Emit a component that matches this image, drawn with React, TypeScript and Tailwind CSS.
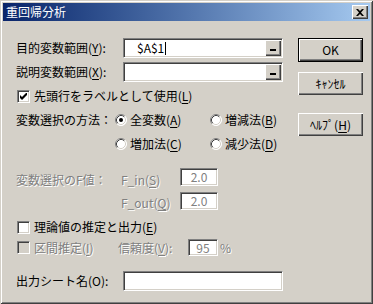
import clsx from 'clsx';
import type { ReactNode } from 'react';

const sunken =
  'border border-t-[#808080] border-l-[#808080] border-b-white border-r-white shadow-[inset_1px_1px_0_#404040,inset_-1px_-1px_0_#d4d0c8]';
const raised =
  'shadow-[inset_1px_1px_0_#fff,inset_-1px_-1px_0_#404040,inset_-2px_-2px_0_#808080]';
const grayText = 'text-[#808080] [text-shadow:1px_1px_0_#fff]';

const U = ({ children }: { children: ReactNode }) => <span className="underline underline-offset-2">{children}</span>;

const Edit = ({
  className,
  value,
  disabled,
  refBtn,
  caret,
}: {
  className?: string;
  value?: string;
  disabled?: boolean;
  refBtn?: boolean;
  caret?: boolean;
}) => (
  <div className={clsx('relative flex items-center bg-white', sunken, className)}>
    {value && (
      <span className={clsx('flex items-center', disabled ? 'w-full justify-center text-[#808080]' : 'pl-[13px] text-black')}>
        {value}
        {caret && <span className="ml-[1px] inline-block w-[1px] h-[13px] bg-black" />}
      </span>
    )}
    {refBtn && (
      <div className={clsx('absolute right-[1px] top-[1px] w-[16px] h-[16px] bg-[#d4d0c8] flex items-end justify-center pb-[5px]', raised)}>
        <span className="block w-[6px] h-[2px] bg-black" />
      </div>
    )}
  </div>
);

const Check = ({ checked, disabled }: { checked?: boolean; disabled?: boolean }) => (
  <span className={clsx('w-[13px] h-[13px] flex items-center justify-center shrink-0', sunken, disabled ? 'bg-[#d4d0c8]' : 'bg-white')}>
    {checked && (
      <svg width="7" height="7" viewBox="0 0 7 7">
        <path d="M0 2L2 4L7 -1L7 2L2 7L0 5Z" fill="#000" />
      </svg>
    )}
  </span>
);

const Radio = ({ checked }: { checked?: boolean }) => (
  <svg width="12" height="12" viewBox="0 0 12 12" className="shrink-0">
    <circle cx="6" cy="6" r="5.5" fill="#fff" />
    <path d="M2.11 9.89 A5.5 5.5 0 0 1 9.89 2.11" fill="none" stroke="#808080" />
    <path d="M9.89 2.11 A5.5 5.5 0 0 1 2.11 9.89" fill="none" stroke="#fff" />
    <path d="M2.82 9.18 A4.5 4.5 0 0 1 9.18 2.82" fill="none" stroke="#404040" />
    <path d="M9.18 2.82 A4.5 4.5 0 0 1 2.82 9.18" fill="none" stroke="#d4d0c8" />
    {checked && <circle cx="6" cy="6" r="2" fill="#000" />}
  </svg>
);

const Btn = ({ children, def, className }: { children: ReactNode; def?: boolean; className?: string }) => (
  <div className={clsx('w-[65px] bg-[#d4d0c8]', def ? 'h-[24px] border border-black' : 'h-[23px]', className)}>
    <div className={clsx('w-full h-full flex items-center justify-center', raised)}>{children}</div>
  </div>
);

export default function App() {
  return (
    <div className="w-[373px] h-[304px] bg-[#d4d0c8] p-[3px] shadow-[inset_1px_1px_0_#d4d0c8,inset_-1px_-1px_0_#404040,inset_2px_2px_0_#fff,inset_-2px_-2px_0_#808080] font-['Noto_Sans_CJK_JP',sans-serif] text-[12px] leading-[14px] text-black select-none">
      {/* title bar */}
      <div className="h-[18px] flex items-center justify-between pl-[3px] pr-[2px] bg-gradient-to-r from-[#0a246a] to-[#a6caf0]">
        <span className="text-white text-[12px]">重回帰分析</span>
        <div className={clsx('w-[16px] h-[14px] bg-[#d4d0c8] flex items-center justify-center', raised)}>
          <svg width="8" height="7" viewBox="0 0 8 7">
            <path d="M0 0h2l2 2 2-2h2L5 3.5 8 7H6L4 5 2 7H0l3-3.5z" fill="#000" />
          </svg>
        </div>
      </div>

      <div className="flex pl-[13px] pt-[17px]">
        {/* left column */}
        <div className="w-[267px] flex flex-col">
          <div className="flex items-center h-[20px]">
            <span className="w-[107px]">目的変数範囲(<U>Y</U>):</span>
            <Edit className="w-[160px] h-[20px]" value="$A$1" caret refBtn />
          </div>
          <div className="flex items-center h-[20px] mt-[4px]">
            <span className="w-[107px]">説明変数範囲(<U>X</U>):</span>
            <Edit className="w-[160px] h-[20px]" refBtn />
          </div>
          <div className="flex items-center h-[16px] mt-[6px] pl-[1px] gap-[4px]">
            <Check checked />
            <span>先頭行をラベルとして使用(<U>L</U>)</span>
          </div>
          <div className="flex items-center h-[16px] mt-[8px]">
            <span className="w-[99px]">変数選択の方法：</span>
            <div className="w-[95px] flex items-center gap-[3px]">
              <Radio checked />
              <span>全変数(<U>A</U>)</span>
            </div>
            <div className="flex items-center gap-[3px]">
              <Radio />
              <span>増減法(<U>B</U>)</span>
            </div>
          </div>
          <div className="flex items-center h-[16px] mt-[8px] pl-[99px]">
            <div className="w-[95px] flex items-center gap-[3px]">
              <Radio />
              <span>増加法(<U>C</U>)</span>
            </div>
            <div className="flex items-center gap-[3px]">
              <Radio />
              <span>減少法(<U>D</U>)</span>
            </div>
          </div>
          <div className="flex items-center h-[18px] mt-[16px]">
            <span className={clsx('w-[105px] pt-[5px]', grayText)}>変数選択のF値：</span>
            <span className={clsx('w-[59px] pt-[5px]', grayText)}>F_in(<U>S</U>)</span>
            <Edit className="w-[38px] h-[18px]" value="2.0" disabled />
          </div>
          <div className="flex items-center h-[18px] mt-[6px]">
            <span className={clsx('ml-[105px] w-[59px] pt-[4px]', grayText)}>F_out(<U>Q</U>)</span>
            <Edit className="w-[38px] h-[18px]" value="2.0" disabled />
          </div>
          <div className="flex items-center h-[16px] mt-[9px] pl-[1px] gap-[4px]">
            <Check />
            <span>理論値の推定と出力(<U>E</U>)</span>
          </div>
          <div className="flex items-center h-[17px] mt-[4px] pl-[1px]">
            <Check disabled />
            <span className={clsx('ml-[4px] w-[84px]', grayText)}>区間推定(<U>I</U>)</span>
            <span className={clsx('w-[70px]', grayText)}>信頼度(<U>V</U>):</span>
            <Edit className="w-[30px] h-[17px]" value="95" disabled />
            <span className={clsx('ml-[2px]', grayText)}>%</span>
          </div>
          <div className="flex items-center h-[20px] mt-[15px]">
            <span className="w-[107px]">出力シート名(O):</span>
            <Edit className="w-[160px] h-[20px]" />
          </div>
        </div>

        {/* right column */}
        <div className="ml-[15px] flex flex-col">
          <Btn def>OK</Btn>
          <Btn className="mt-[10px]">ｷｬﾝｾﾙ</Btn>
          <Btn className="mt-[18px]">
            <span>ﾍﾙﾌﾟ(<U>H</U>)</span>
          </Btn>
        </div>
      </div>
    </div>
  );
}
